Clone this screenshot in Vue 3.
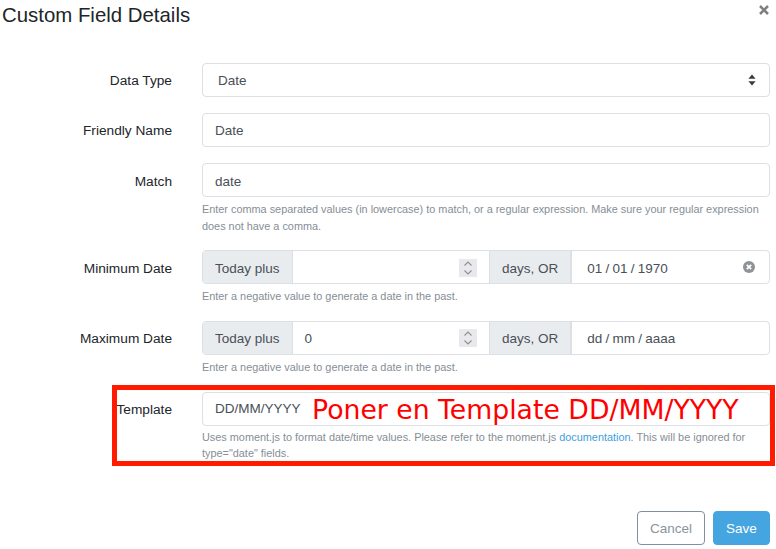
<template>
  <div class="modal">
    <header class="modal-header">
      <h4 class="modal-title">Custom Field Details</h4>
      <svg class="close" width="10" height="10" viewBox="0 0 10 10" aria-label="Close">
        <path d="M1 1L9 9M9 1L1 9" />
      </svg>
    </header>

    <form class="modal-body" @submit.prevent>
      <!-- Data type select -->
      <div class="row">
        <label>Data Type</label>
        <div class="control">
          <div class="form-control select">
            <span>Date</span>
            <svg width="8" height="12" viewBox="0 0 8 12" class="carets">
              <path d="M4 0.5L7.6 4.8H0.4z" />
              <path d="M4 11.5L7.6 7.2H0.4z" />
            </svg>
          </div>
        </div>
      </div>

      <div class="row">
        <label>Friendly Name</label>
        <div class="control">
          <div class="form-control">Date</div>
        </div>
      </div>

      <div class="row match-row low">
        <label>Match</label>
        <div class="control">
          <div class="form-control">date</div>
          <small class="help">
            Enter comma separated values (in lowercase) to match, or a regular expression. Make sure your regular expression does not have a comma.
          </small>
        </div>
      </div>

      <!-- Date ranges -->
      <div v-for="r in ranges" :key="r.label" class="row date-row" :class="{ low: r.clear }">
        <label>{{ r.label }}</label>
        <div class="control">
          <div class="input-group">
            <span class="addon first">Today plus</span>
            <div class="number">
              <span>{{ r.days }}</span>
              <span class="spinner">
                <svg width="18" height="18" viewBox="0 0 18 18">
                  <path d="M5.5 6.5L9 3L12.5 6.5M5.5 11.5L9 15L12.5 11.5" />
                </svg>
              </span>
            </div>
            <span class="addon">days, OR</span>
            <div class="date">
              <span>{{ r.date }}</span>
              <svg v-if="r.clear" width="14" height="14" viewBox="0 0 14 14" class="clear">
                <circle cx="7" cy="7" r="6" />
                <path d="M4.8 4.8L9.2 9.2M9.2 4.8L4.8 9.2" />
              </svg>
            </div>
          </div>
          <small class="help">Enter a negative value to generate a date in the past.</small>
        </div>
      </div>

      <div class="row">
        <label>Template</label>
        <div class="control">
          <div class="form-control template">DD/MM/YYYY</div>
          <small class="help">
            Uses moment.js to format date/time values. Please refer to the moment.js <a href="#">documentation</a>. This will be ignored for type="date" fields.
          </small>
        </div>
      </div>
    </form>

    <footer class="modal-footer">
      <button type="button" class="btn cancel">Cancel</button>
      <button type="button" class="btn save">Save</button>
    </footer>

    <!-- Red annotation drawn over the screenshot -->
    <div class="annotation">
      <span>Poner en Template DD/MM/YYYY</span>
    </div>
  </div>
</template>

<script setup>
const ranges = [
  { label: 'Minimum Date', days: '', date: '01 / 01 / 1970', clear: true },
  { label: 'Maximum Date', days: '0', date: 'dd / mm / aaaa', clear: false }
]
</script>

<style scoped>
.modal {
  position: relative;
  width: 776px;
  height: 549px;
  overflow: hidden;
  background: #fff;
  font-family: "Liberation Sans", Arial, sans-serif;
  font-size: 13.5px;
  color: #495057;
}

.modal-header {
  display: flex;
  justify-content: space-between;
  align-items: flex-start;
  height: 63px;
  padding: 0 7px 0 2px;
  box-sizing: border-box;
}

.modal-title {
  margin: 3px 0 0;
  font-size: 20.4px;
  line-height: 24px;
  font-weight: 400;
  color: #212529;
}

.close {
  margin-top: 5px;
}

.close path {
  fill: none;
  stroke: #808080;
  stroke-width: 2.6;
}

.modal-body {
  display: flex;
  flex-direction: column;
  padding-right: 6px;
}

.row {
  display: grid;
  grid-template-columns: 172px 1fr;
  column-gap: 30px;
  margin-bottom: 16.2px;
}

.match-row {
  margin-bottom: 16.36px;
}

.date-row {
  margin-bottom: 16.7px;
}

.date-row.low {
  margin-bottom: 17.1px;
}

label {
  padding-top: 9px;
  font-size: 13.7px;
  line-height: 17px;
  text-align: right;
  color: #212529;
}

.form-control {
  height: 34px;
  box-sizing: border-box;
  padding: 0 12px;
  display: flex;
  align-items: center;
  background: #fff;
  border: 1px solid #dcdfe3;
  border-radius: 4px;
}

/* these rows sit a pixel lower inside their boxes */
.low label {
  padding-top: 10px;
}

.low .form-control,
.low .addon,
.low .number,
.low .date {
  padding-top: 2px;
}

.select {
  justify-content: space-between;
  padding-left: 15px;
  padding-right: 13px;
}

.carets path {
  fill: #343a40;
}

.help {
  display: block;
  margin-top: 3.4px;
  font-size: 10.88px;
  line-height: 16.32px;
  color: #868e96;
}

.match-row .help {
  margin-top: 4px;
}

.help a {
  color: #3e9fdc;
  text-decoration: none;
}

.input-group {
  display: flex;
  height: 34px;
  box-sizing: border-box;
  border: 1px solid #dcdfe3;
  border-radius: 4px;
  overflow: hidden;
}

.addon {
  display: flex;
  align-items: center;
  padding: 0 12px;
  background: #e9ecef;
  border-right: 1px solid #dcdfe3;
}

.addon:not(.first) {
  border-left: 1px solid #dcdfe3;
}

.number {
  flex: 0 0 196.4px;
  display: flex;
  align-items: center;
  justify-content: space-between;
  box-sizing: border-box;
  padding: 0 12px;
}

.spinner {
  display: flex;
  background: #e9e9ed;
}

.spinner path {
  fill: none;
  stroke: #8f8f8f;
  stroke-width: 1.1;
}

.date {
  flex: 1;
  display: flex;
  align-items: center;
  justify-content: space-between;
  padding: 0 13px 0 15px;
  border-left: 1px solid #dcdfe3;
  word-spacing: -0.5px;
}

.clear {
  transform: translateY(-1px);
}

.clear circle {
  fill: #8f9296;
}

.clear path {
  fill: none;
  stroke: #fff;
  stroke-width: 1.8;
}

.modal-footer {
  position: absolute;
  right: 6px;
  bottom: 4px;
  display: flex;
  gap: 8px;
}

.btn {
  width: 68px;
  height: 34px;
  padding: 0;
  border-radius: 4px;
  font: inherit;
  cursor: pointer;
}

.cancel {
  background: #fff;
  border: 1px solid #7f8fa4;
  color: #8a949e;
}

.save {
  width: 57px;
  background: #45a5e0;
  border: 1px solid #45a5e0;
  color: #fff;
}

.annotation {
  position: absolute;
  left: 112px;
  top: 385px;
  width: 663px;
  height: 81px;
  box-sizing: border-box;
  border: 5px solid #ff1a00;
  pointer-events: none;
}

.annotation span {
  position: absolute;
  left: 195px;
  top: 4px;
  font-family: "DejaVu Sans", sans-serif;
  font-size: 26.7px;
  line-height: 32px;
  color: #ff0000;
  white-space: nowrap;
}
</style>

<style>
body {
  margin: 0;
  background: #fff;
}
</style>
